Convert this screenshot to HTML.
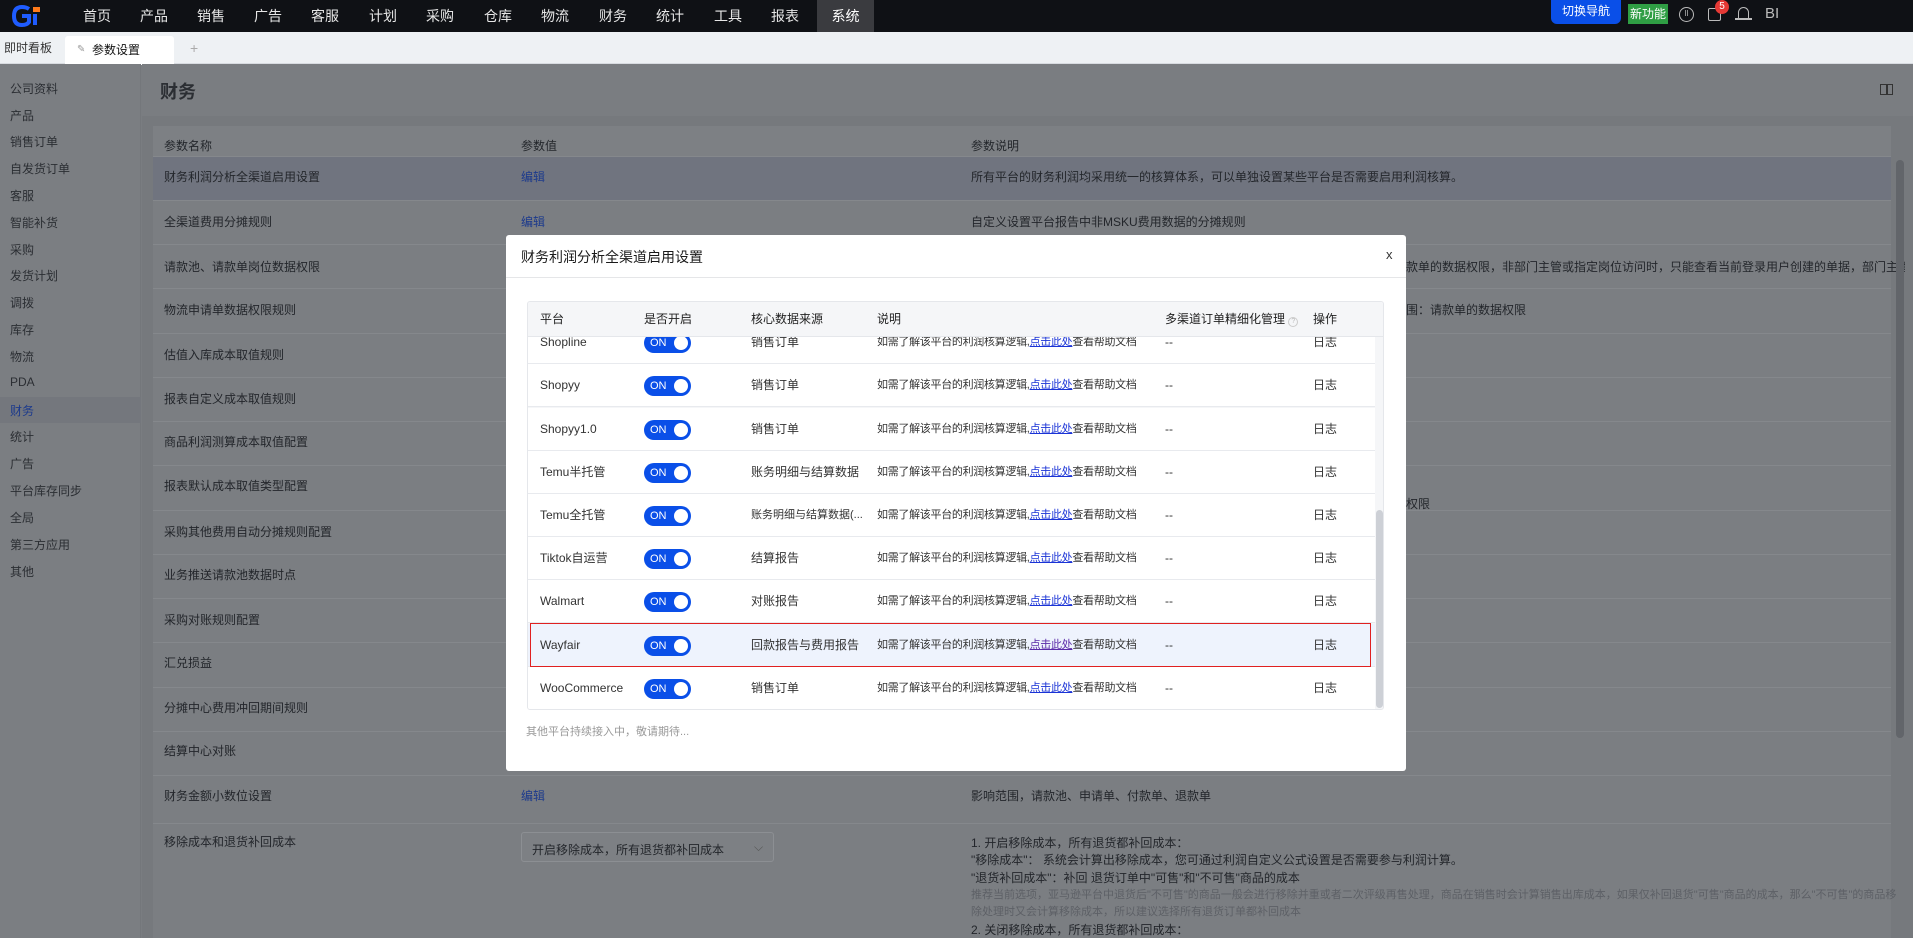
<!DOCTYPE html>
<html><head><meta charset="utf-8"><style>
*{margin:0;padding:0;box-sizing:border-box}
body{width:1913px;height:938px;overflow:hidden;font-family:"Liberation Sans","Noto Sans CJK SC",sans-serif;font-size:12px;color:#222;background:#7a7d81;position:relative}
.a{position:absolute;white-space:nowrap}
#nav{left:0;top:0;width:1913px;height:32px;background:#0f1115}
.nv{position:absolute;top:0;height:32px;line-height:32px;color:#e6e6e6;font-size:14px}
#tabs{left:0;top:32px;width:1913px;height:32px;background:#eef1f4;border-bottom:1px solid #d8dbe0}
.sb{position:absolute;left:10px;font-size:12px;color:#2b2e33}
.row{position:absolute;left:153px;width:1738px;border-top:1px solid #85888c}
.bt{position:absolute;font-size:12px;color:#23262b;white-space:nowrap}
.bl{color:#1c3a8c}
#modal{left:506px;top:235px;width:900px;height:536px;background:#fff;border-radius:3px}
.mr{position:absolute;left:0;width:847px;height:43px;border-bottom:1px solid #e8eaee;background:#fff}
.mr span{position:absolute;top:0;line-height:43px;font-size:12px;color:#333;white-space:nowrap}
.mr span.d{font-size:11px;letter-spacing:-0.3px}
.tg{position:absolute;left:116px;top:12px;width:47px;height:20px;border-radius:10px;background:#0a4fe8}
.tg b{position:absolute;left:6px;top:0;line-height:20px;color:#fff;font-size:11px;font-weight:normal}
.tg i{position:absolute;right:3px;top:3px;width:14px;height:14px;border-radius:7px;background:#fff}
.lk{color:#1a33d6;text-decoration:underline}
.log{color:#1456e8}
</style></head><body>
<div id="nav" class="a">
<div class="a" style="left:12px;top:5px;width:30px;height:22px">
<svg width="30" height="22" viewBox="0 0 30 22"><path d="M17 4 Q14 2 10 2 Q2 2 2 11 Q2 20 10 20 Q15 20 17 17 L17 11 L10 11" fill="none" stroke="#1f5cff" stroke-width="4"/><rect x="21" y="9" width="4" height="11" fill="#1f5cff"/><rect x="21" y="2" width="7" height="5" fill="#ff7a1a"/></svg></div>
<div class="nv" style="left:83px">首页</div><div class="nv" style="left:140px">产品</div><div class="nv" style="left:197px">销售</div><div class="nv" style="left:254px">广告</div><div class="nv" style="left:311px">客服</div><div class="nv" style="left:369px">计划</div><div class="nv" style="left:426px">采购</div><div class="nv" style="left:484px">仓库</div><div class="nv" style="left:541px">物流</div><div class="nv" style="left:599px">财务</div><div class="nv" style="left:656px">统计</div><div class="nv" style="left:714px">工具</div><div class="nv" style="left:771px">报表</div>
<div class="nv" style="left:817px;width:57px;background:#3a3b3f;text-align:center;color:#fff">系统</div>
<div class="a" style="left:1551px;top:0;width:70px;height:24px;background:#0a4fe8;border-radius:0 0 6px 6px;color:#fff;font-size:12px;line-height:22px;text-align:center">切换导航</div>
<div class="a" style="left:1628px;top:4px;width:40px;height:20px;background:#2f9e44;color:#fff;font-size:12px;line-height:20px;text-align:center">新功能</div>
<div class="a" style="left:1679px;top:7px;width:15px;height:15px;border:1.5px solid #bbb;border-radius:50%;color:#bbb;font-size:8px;line-height:12px;text-align:center">ll</div>
<div class="a" style="left:1708px;top:8px;width:13px;height:13px;border:1.5px solid #bbb;border-radius:2px"></div>
<div class="a" style="left:1715px;top:0;width:14px;height:14px;border-radius:7px;background:#e53935;color:#fff;font-size:10px;line-height:14px;text-align:center">5</div>
<div class="a" style="left:1738px;top:7px;width:11px;height:12px;border:1.5px solid #bbb;border-bottom:none;border-radius:6px 6px 0 0"></div>
<div class="a" style="left:1735px;top:18px;width:17px;height:1.5px;background:#bbb"></div>
<div class="a" style="left:1765px;top:0;line-height:28px;color:#bbb;font-size:15px">BI</div>
</div>
<div id="tabs" class="a">
<div class="a" style="left:4px;top:0;line-height:32px;font-size:12px;color:#333">即时看板</div>
<div class="a" style="left:65px;top:4px;width:109px;height:29px;background:#fff;border-radius:3px 3px 0 0"><span class="a" style="left:12px;top:0;line-height:28px;color:#999;font-size:10px">✎</span><span class="a" style="left:27px;top:0;line-height:28px;font-size:12px;color:#111">参数设置</span></div>
<div class="a" style="left:190px;top:0;line-height:32px;color:#aaa;font-size:14px">+</div>
</div>
<div class="a" style="left:0;top:64px;width:141px;height:874px;background:#7b7e82;border-right:1px solid #74777b"></div>
<div class="a" style="left:0;top:397px;width:141px;height:26px;background:#74777d"></div>
<div class="sb" style="top:80px">公司资料</div><div class="sb" style="top:107px">产品</div><div class="sb" style="top:133px">销售订单</div><div class="sb" style="top:160px">自发货订单</div><div class="sb" style="top:187px">客服</div><div class="sb" style="top:214px">智能补货</div><div class="sb" style="top:241px">采购</div><div class="sb" style="top:267px">发货计划</div><div class="sb" style="top:294px">调拨</div><div class="sb" style="top:321px">库存</div><div class="sb" style="top:348px">物流</div><div class="sb" style="top:375px">PDA</div><div class="sb" style="top:402px;color:#1c3a8c">财务</div><div class="sb" style="top:428px">统计</div><div class="sb" style="top:455px">广告</div><div class="sb" style="top:482px">平台库存同步</div><div class="sb" style="top:509px">全局</div><div class="sb" style="top:536px">第三方应用</div><div class="sb" style="top:563px">其他</div>
<div class="a" style="left:142px;top:64px;width:1771px;height:52px;background:#7a7d81"></div>
<div class="a" style="left:160px;top:78px;font-size:18px;font-weight:bold;color:#2b2e33">财务</div>
<div class="a" style="left:1880px;top:84px;width:13px;height:11px;border:1.5px solid #333"></div><div class="a" style="left:1886px;top:84px;width:1.5px;height:11px;background:#333"></div>
<div class="a" style="left:142px;top:116px;width:1771px;height:822px;background:#76797d"></div>
<div class="a" style="left:153px;top:126px;width:1738px;height:812px;background:#7b7e82"></div>
<div class="a" style="left:153px;top:126px;width:1738px;height:30px;background:#7d8084"></div>
<div class="bt" style="left:164px;top:137px">参数名称</div><div class="bt" style="left:521px;top:137px">参数值</div><div class="bt" style="left:971px;top:137px">参数说明</div>
<div class="a" style="left:153px;top:156px;width:1738px;height:44px;background:#70747f"></div>
<div class="row" style="top:156px"></div><div class="row" style="top:200px"></div><div class="row" style="top:244px"></div><div class="row" style="top:288px"></div><div class="row" style="top:333px"></div><div class="row" style="top:377px"></div><div class="row" style="top:421px"></div><div class="row" style="top:465px"></div><div class="row" style="top:510px"></div><div class="row" style="top:554px"></div><div class="row" style="top:598px"></div><div class="row" style="top:642px"></div><div class="row" style="top:687px"></div><div class="row" style="top:731px"></div><div class="row" style="top:775px"></div><div class="row" style="top:823px"></div>
<div class="bt" style="left:164px;top:168px">财务利润分析全渠道启用设置</div><div class="bt bl" style="left:521px;top:168px">编辑</div><div class="bt" style="left:971px;top:168px">所有平台的财务利润均采用统一的核算体系，可以单独设置某些平台是否需要启用利润核算。</div>
<div class="bt" style="left:164px;top:213px">全渠道费用分摊规则</div><div class="bt bl" style="left:521px;top:213px">编辑</div><div class="bt" style="left:971px;top:213px">自定义设置平台报告中非MSKU费用数据的分摊规则</div>
<div class="bt" style="left:164px;top:258px">请款池、请款单岗位数据权限</div><div class="bt" style="left:1406px;top:258px">款单的数据权限，非部门主管或指定岗位访问时，只能查看当前登录用户创建的单据，部门主管或指定</div>
<div class="bt" style="left:164px;top:301px">物流申请单数据权限规则</div><div class="bt" style="left:1406px;top:301px">围：请款单的数据权限</div>
<div class="bt" style="left:164px;top:346px">估值入库成本取值规则</div>
<div class="bt" style="left:164px;top:390px">报表自定义成本取值规则</div>
<div class="bt" style="left:164px;top:433px">商品利润测算成本取值配置</div>
<div class="bt" style="left:164px;top:477px">报表默认成本取值类型配置</div><div class="bt" style="left:1406px;top:495px">权限</div>
<div class="bt" style="left:164px;top:523px">采购其他费用自动分摊规则配置</div>
<div class="bt" style="left:164px;top:566px">业务推送请款池数据时点</div>
<div class="bt" style="left:164px;top:611px">采购对账规则配置</div>
<div class="bt" style="left:164px;top:654px">汇兑损益</div>
<div class="bt" style="left:164px;top:699px">分摊中心费用冲回期间规则</div>
<div class="bt" style="left:164px;top:742px">结算中心对账</div>
<div class="bt" style="left:164px;top:787px">财务金额小数位设置</div><div class="bt bl" style="left:521px;top:787px">编辑</div><div class="bt" style="left:971px;top:787px">影响范围，请款池、申请单、付款单、退款单</div>
<div class="bt" style="left:164px;top:833px">移除成本和退货补回成本</div>
<div class="a" style="left:521px;top:832px;width:253px;height:30px;border:1px solid #8c8f93;border-radius:3px;background:#7d8084"><span class="bt" style="left:10px;top:8px">开启移除成本，所有退货都补回成本</span><span class="bt" style="left:232px;top:7px;color:#555">⌵</span></div>
<div class="bt" style="left:971px;top:834px">1. 开启移除成本，所有退货都补回成本：</div>
<div class="bt" style="left:971px;top:851px">"移除成本"： 系统会计算出移除成本，您可通过利润自定义公式设置是否需要参与利润计算。</div>
<div class="bt" style="left:971px;top:869px">"退货补回成本"：补回 退货订单中"可售"和"不可售"商品的成本</div>
<div class="bt" style="left:971px;top:886px;color:#5d6066;font-size:11px">推荐当前选项，亚马逊平台中退货后"不可售"的商品一般会进行移除并重或者二次评级再售处理，商品在销售时会计算销售出库成本，如果仅补回退货"可售"商品的成本，那么"不可售"的商品移</div>
<div class="bt" style="left:971px;top:903px;color:#5d6066;font-size:11px">除处理时又会计算移除成本，所以建议选择所有退货订单都补回成本</div>
<div class="bt" style="left:971px;top:921px">2. 关闭移除成本，所有退货都补回成本：</div>
<div class="a" style="left:1896px;top:160px;width:8px;height:578px;background:#62656a;border-radius:4px"></div>
<div class="a" style="left:1905px;top:116px;width:8px;height:822px;background:#76797d"></div>
<div id="modal" class="a">
<div class="a" style="left:15px;top:12px;font-size:14px;color:#1a1a1a;line-height:20px">财务利润分析全渠道启用设置</div>
<div class="a" style="left:880px;top:12px;font-size:13px;color:#333">x</div>
<div class="a" style="left:0;top:42px;width:900px;height:1px;background:#e5e6e8"></div>
<div class="a" style="left:21px;top:66px;width:857px;height:409px;border:1px solid #e5e7eb;border-radius:3px;overflow:hidden;background:#f5f6f8">
<div class="a" style="left:0;top:19px;width:847px;height:390px">
<div class="mr" style="top:0"><span style="left:12px">Shopline</span><div class="tg"><b>ON</b><i></i></div><span style="left:223px">销售订单</span><span class="d" style="left:349px">如需了解该平台的利润核算逻辑,<u class="lk">点击此处</u>查看帮助文档</span><span style="left:637px">--</span><span style="left:785px" class="log">日志</span></div>
<div class="mr" style="top:43px"><span style="left:12px">Shopyy</span><div class="tg"><b>ON</b><i></i></div><span style="left:223px">销售订单</span><span class="d" style="left:349px">如需了解该平台的利润核算逻辑,<u class="lk">点击此处</u>查看帮助文档</span><span style="left:637px">--</span><span style="left:785px" class="log">日志</span></div>
<div class="mr" style="top:87px"><span style="left:12px">Shopyy1.0</span><div class="tg"><b>ON</b><i></i></div><span style="left:223px">销售订单</span><span class="d" style="left:349px">如需了解该平台的利润核算逻辑,<u class="lk">点击此处</u>查看帮助文档</span><span style="left:637px">--</span><span style="left:785px" class="log">日志</span></div>
<div class="mr" style="top:130px"><span style="left:12px">Temu半托管</span><div class="tg"><b>ON</b><i></i></div><span style="left:223px">账务明细与结算数据</span><span class="d" style="left:349px">如需了解该平台的利润核算逻辑,<u class="lk">点击此处</u>查看帮助文档</span><span style="left:637px">--</span><span style="left:785px" class="log">日志</span></div>
<div class="mr" style="top:173px"><span style="left:12px">Temu全托管</span><div class="tg"><b>ON</b><i></i></div><span style="left:223px;font-size:11px">账务明细与结算数据(...</span><span class="d" style="left:349px">如需了解该平台的利润核算逻辑,<u class="lk">点击此处</u>查看帮助文档</span><span style="left:637px">--</span><span style="left:785px" class="log">日志</span></div>
<div class="mr" style="top:216px"><span style="left:12px">Tiktok自运营</span><div class="tg"><b>ON</b><i></i></div><span style="left:223px">结算报告</span><span class="d" style="left:349px">如需了解该平台的利润核算逻辑,<u class="lk">点击此处</u>查看帮助文档</span><span style="left:637px">--</span><span style="left:785px" class="log">日志</span></div>
<div class="mr" style="top:259px"><span style="left:12px">Walmart</span><div class="tg"><b>ON</b><i></i></div><span style="left:223px">对账报告</span><span class="d" style="left:349px">如需了解该平台的利润核算逻辑,<u class="lk">点击此处</u>查看帮助文档</span><span style="left:637px">--</span><span style="left:785px" class="log">日志</span></div>
<div class="mr" style="top:303px;background:#eef3fd"><span style="left:12px">Wayfair</span><div class="tg"><b>ON</b><i></i></div><span style="left:223px">回款报告与费用报告</span><span class="d" style="left:349px">如需了解该平台的利润核算逻辑,<u class="lk" style="color:#5a2aa8">点击此处</u>查看帮助文档</span><span style="left:637px">--</span><span style="left:785px" class="log">日志</span></div>
<div class="mr" style="top:346px"><span style="left:12px">WooCommerce</span><div class="tg"><b>ON</b><i></i></div><span style="left:223px">销售订单</span><span class="d" style="left:349px">如需了解该平台的利润核算逻辑,<u class="lk">点击此处</u>查看帮助文档</span><span style="left:637px">--</span><span style="left:785px" class="log">日志</span></div>
</div>
<div class="a" style="left:0;top:0;width:857px;height:35px;background:#f5f6f8;border-bottom:1px solid #e5e7eb;font-size:12px;color:#222">
<span class="a" style="left:12px;top:0;line-height:35px">平台</span><span class="a" style="left:116px;top:0;line-height:35px">是否开启</span><span class="a" style="left:223px;top:0;line-height:35px">核心数据来源</span><span class="a" style="left:349px;top:0;line-height:35px">说明</span><span class="a" style="left:637px;top:0;line-height:35px">多渠道订单精细化管理 <span style="display:inline-block;width:10px;height:10px;border:1px solid #ccc;border-radius:50%;font-size:7px;line-height:8px;text-align:center;color:#bbb">?</span></span><span class="a" style="left:785px;top:0;line-height:35px">操作</span></div>
<div class="a" style="left:848px;top:208px;width:7px;height:198px;background:#cdd0d6;border-radius:4px"></div>
</div>
<div class="a" style="left:20px;top:488px;font-size:11px;color:#999">其他平台持续接入中，敬请期待...</div>
</div>
<div class="a" style="left:530px;top:623px;width:841px;height:44px;border:1px solid #e02020"></div>
</body></html>
